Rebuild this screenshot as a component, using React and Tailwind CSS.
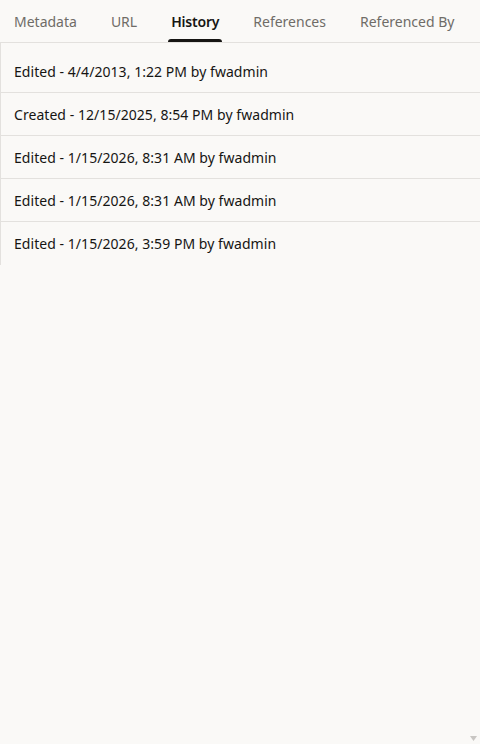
import React from "react";

const tabs = ["Metadata", "URL", "History", "References", "Referenced By"];
const rows = [
  "Edited - 4/4/2013, 1:22 PM by fwadmin",
  "Created - 12/15/2025, 8:54 PM by fwadmin",
  "Edited - 1/15/2026, 8:31 AM by fwadmin",
  "Edited - 1/15/2026, 8:31 AM by fwadmin",
  "Edited - 1/15/2026, 3:59 PM by fwadmin",
];

export default function App() {
  return (
    <div
      className="relative w-[480px] h-[744px] bg-[#faf9f7] text-[#161513] overflow-hidden"
      style={{ fontFamily: '"Noto Sans", "Open Sans", sans-serif' }}
    >
      <div className="flex h-[43px] border-b border-[#e3e1de] pl-[11px] gap-[28px]">
        {tabs.map((t) => {
          const active = t === "History";
          return (
            <div key={t} className="relative flex items-center px-[3px]">
              <span
                className={
                  active
                    ? "text-[14px] font-semibold text-[#161513] tracking-[-0.2px]"
                    : "text-[14px] text-[#6f6c67]"
                }
              >
                {t}
              </span>
              {active && (
                <div className="absolute left-0 right-0 bottom-0 h-[3px] rounded-t-[3px] bg-[#161513]" />
              )}
            </div>
          );
        })}
      </div>
      <div className="pt-[7px] w-[480px] border-l border-[#e3e1de]">
        {rows.map((r, i) => (
          <div
            key={i}
            className={
              "h-[43px] flex items-center pl-[13px] text-[14px] tracking-[0.05px] " +
              (i < rows.length - 1 ? "border-b border-[#e3e1de]" : "")
            }
          >
            {r}
          </div>
        ))}
      </div>
      <svg
        className="absolute right-[3px] bottom-[3px]"
        width="7"
        height="5"
        viewBox="0 0 7 5"
      >
        <polygon points="0,0 7,0 3.5,5" fill="#c8c6c3" />
      </svg>
    </div>
  );
}
